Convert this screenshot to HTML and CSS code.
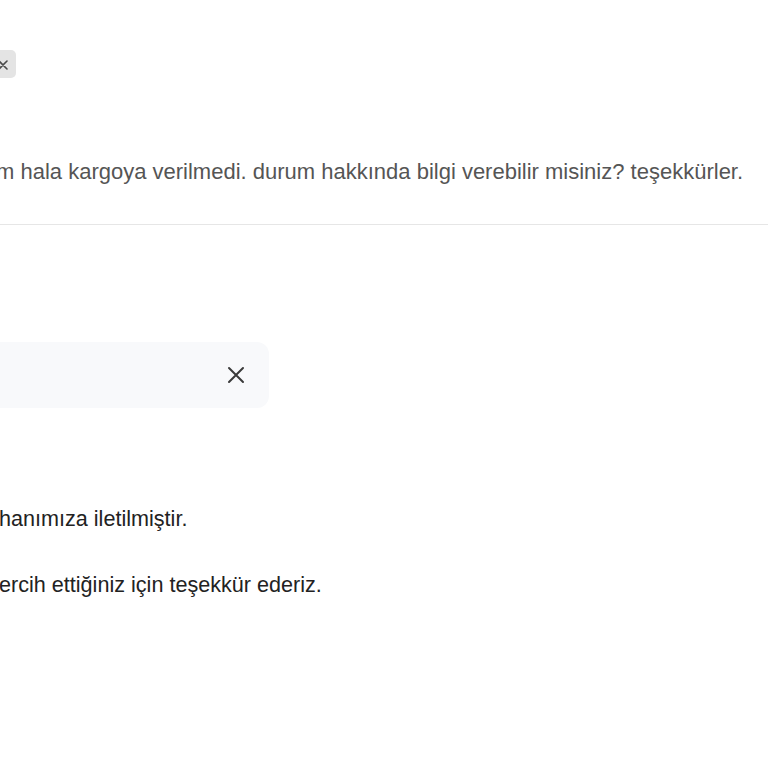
FILE: index.html
```html
<!DOCTYPE html>
<html lang="tr">
<head>
<meta charset="utf-8">
<link rel="stylesheet" href="styles.css">
</head>
<body>
<div class="page">
  <section class="request">
    <div class="tag">
      <svg class="tag-x" width="10" height="10" viewBox="0 0 10 10" aria-hidden="true">
        <path d="M1 1 L9 9 M9 1 L1 9" stroke="#4a4a4a" stroke-width="1.6" stroke-linecap="round" fill="none"/>
      </svg>
    </div>
    <p class="request-text">m hala kargoya verilmedi. durum hakkında bilgi verebilir misiniz? teşekkürler.</p>
  </section>
  <hr class="divider">
  <section class="reply">
    <div class="field">
      <span class="field-value"></span>
      <svg class="close" width="18" height="18" viewBox="0 0 18 18" aria-hidden="true">
        <path d="M2 2 L16 16 M16 2 L2 16" stroke="#3a3a3a" stroke-width="2" stroke-linecap="round" fill="none"/>
      </svg>
    </div>
    <p class="reply-text first">hanımıza iletilmiştir.</p>
    <p class="reply-text">ercih ettiğiniz için teşekkür ederiz.</p>
  </section>
</div>
</body>
</html>
```
FILE: styles.css
```css
html, body {
  margin: 0;
  padding: 0;
  background: #ffffff;
  overflow: hidden;
}
body {
  width: 768px;
  height: 768px;
  font-family: "Liberation Sans", Arial, sans-serif;
}
.page {
  display: flex;
  flex-direction: column;
}
.request {
  display: flex;
  flex-direction: column;
  padding-top: 50px;
}
.tag {
  margin-left: -20px;
  width: 36px;
  height: 28px;
  background: #e4e4e4;
  border-radius: 5px;
  display: flex;
  align-items: center;
  justify-content: flex-end;
  padding-right: 8px;
  box-sizing: border-box;
}
.tag-x {
  display: block;
  margin-top: 2px;
}
.request-text {
  margin: 80px 0 0 -4px;
  font-size: 22px;
  line-height: 28px;
  color: #555555;
  white-space: nowrap;
}
.divider {
  margin: 38px 0 0 0;
  border: 0;
  border-top: 1px solid #e6e6e6;
  height: 0;
}
.reply {
  display: flex;
  flex-direction: column;
  padding-top: 117px;
}
.field {
  margin-left: -40px;
  width: 309px;
  height: 66px;
  background: #f8f9fb;
  border-radius: 12px;
  display: flex;
  align-items: center;
  justify-content: space-between;
  padding-right: 24px;
  box-sizing: border-box;
}
.reply-text {
  margin: 38px 0 0 -1px;
  font-size: 21.6px;
  line-height: 28px;
  color: #222222;
  white-space: nowrap;
}
.reply-text.first {
  margin-top: 97px;
}
```
